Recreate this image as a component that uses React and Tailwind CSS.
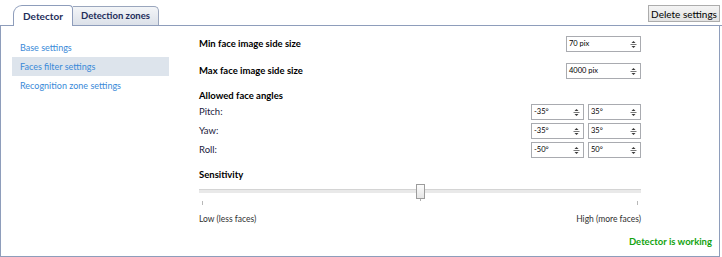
import React from "react";

function Spin({ value, width }) {
  return (
    <div className={`flex items-center h-[16px] border border-[#a9abb0] bg-white ${width}`}>
      <span className="flex-1 pl-[2px] text-[7.5px] leading-none text-black">{value}</span>
      <div className="flex items-center justify-center w-[9px] h-full mr-[2px]">
        <svg width="7" height="11" viewBox="0 0 7 11">
          <path d="M1.5 4L3.5 2L5.5 4Z" fill="#3a3a3a" />
          <line x1="0.5" y1="5.5" x2="6.5" y2="5.5" stroke="#7a7a7a" strokeWidth="1" />
          <path d="M1.5 7L3.5 9L5.5 7Z" fill="#3a3a3a" />
        </svg>
      </div>
    </div>
  );
}

export default function App() {
  const nav = ["Base settings", "Faces filter settings", "Recognition zone settings"];
  const angles = [
    ["Pitch:", "-35°", "35°"],
    ["Yaw:", "-35°", "35°"],
    ["Roll:", "-50°", "50°"],
  ];

  return (
    <div
      className="w-[722px] h-[257px] bg-white flex flex-col overflow-hidden"
      style={{ fontFamily: 'Lato, "Open Sans", sans-serif' }}
    >
      {/* tab strip */}
      <div className="flex items-end h-[26px] border-b border-[#8e9dbb] pl-[13px] pr-[2px]">
        <div className="relative z-10 -mb-px h-[21px] w-[60px] flex items-center justify-center bg-white border border-b-0 border-[#8e9dbb] rounded-tl-[9px] rounded-tr-[4px]">
          <span className="text-[10px] font-bold text-[#1e2d5a]">Detector</span>
        </div>
        <div className="h-[19px] w-[86px] flex items-center justify-center bg-gradient-to-b from-[#f3f5f8] to-[#dce1e9] border border-b-0 border-l-0 border-[#9aa6bd] rounded-tr-[5px]">
          <span className="text-[9.5px] font-bold text-[#1e2d5a]">Detection zones</span>
        </div>
        <div className="flex-1" />
        <button className="mb-[3px] h-[17px] w-[72px] text-[10px] leading-none text-black border border-[#acacac] bg-gradient-to-b from-[#f4f4f4] to-[#e3e3e3]">
          Delete settings
        </button>
      </div>

      {/* frame body */}
      <div className="flex-1 flex flex-col border-l border-r border-b border-[#8e9dbb] mr-[2px]">
        <div className="flex">
          {/* left nav */}
          <div className="w-[168px] pl-[11px] pt-[12px] flex flex-col">
            {nav.map((n, i) => (
              <div
                key={n}
                className={`h-[19px] flex items-center pl-[8px] text-[9px] text-[#3a8ad8] ${i === 1 ? "bg-[#dde4ec]" : ""}`}
              >
                {n}
              </div>
            ))}
          </div>

          {/* content */}
          <div className="flex-1 pl-[30px] pr-[78px] pt-[10px] flex flex-col text-[9.5px] text-[#22203c]">
            <div className="flex items-center justify-between h-[16px]">
              <span className="font-bold text-black">Min face image side size</span>
              <Spin value="70 pix" width="w-[75px]" />
            </div>
            <div className="flex items-center justify-between h-[16px] mt-[11px]">
              <span className="font-bold text-black">Max face image side size</span>
              <Spin value="4000 pix" width="w-[75px]" />
            </div>
            <div className="font-bold text-black mt-[9px] h-[16px] flex items-center">Allowed face angles</div>
            <div className="flex flex-col gap-[3px]">
              {angles.map(([l, a, b]) => (
                <div key={l} className="flex items-center justify-between h-[16px]">
                  <span>{l}</span>
                  <div className="flex gap-[4px]">
                    <Spin value={a} width="w-[53px]" />
                    <Spin value={b} width="w-[53px]" />
                  </div>
                </div>
              ))}
            </div>
            <div className="font-bold text-black mt-[9px] h-[16px] flex items-center">Sensitivity</div>

            {/* slider */}
            <div className="relative h-[17px] mt-[1px]">
              <div className="absolute left-0 right-0 top-[5px] h-[4px] bg-[#e9e9e9] border-t border-[#d4d4d4]" />
              <div className="absolute left-[217px] top-0 w-[9px] h-[15px] border border-[#9c9c9c] bg-gradient-to-b from-[#fcfcfc] to-[#e6e6e6]" />
              <div className="absolute left-[221px] top-[15px] w-px h-[2px] bg-[#b0b0b0]" />
            </div>
            <div className="flex justify-between h-[6px] px-[3px]">
              <div className="w-px h-[4px] bg-[#b8b8b8]" />
              <div className="w-px h-[4px] bg-[#b8b8b8]" />
            </div>
            <div className="flex justify-between mt-[5px] h-[14px] items-center text-[8.5px] text-[#303030]">
              <span>Low (less faces)</span>
              <span>High (more faces)</span>
            </div>
          </div>
        </div>
        <div className="flex-1" />
        <div className="flex justify-end pr-[7px] pb-[7px]">
          <span className="text-[9.5px] font-bold text-[#13a30f]">Detector is working</span>
        </div>
      </div>
    </div>
  );
}
